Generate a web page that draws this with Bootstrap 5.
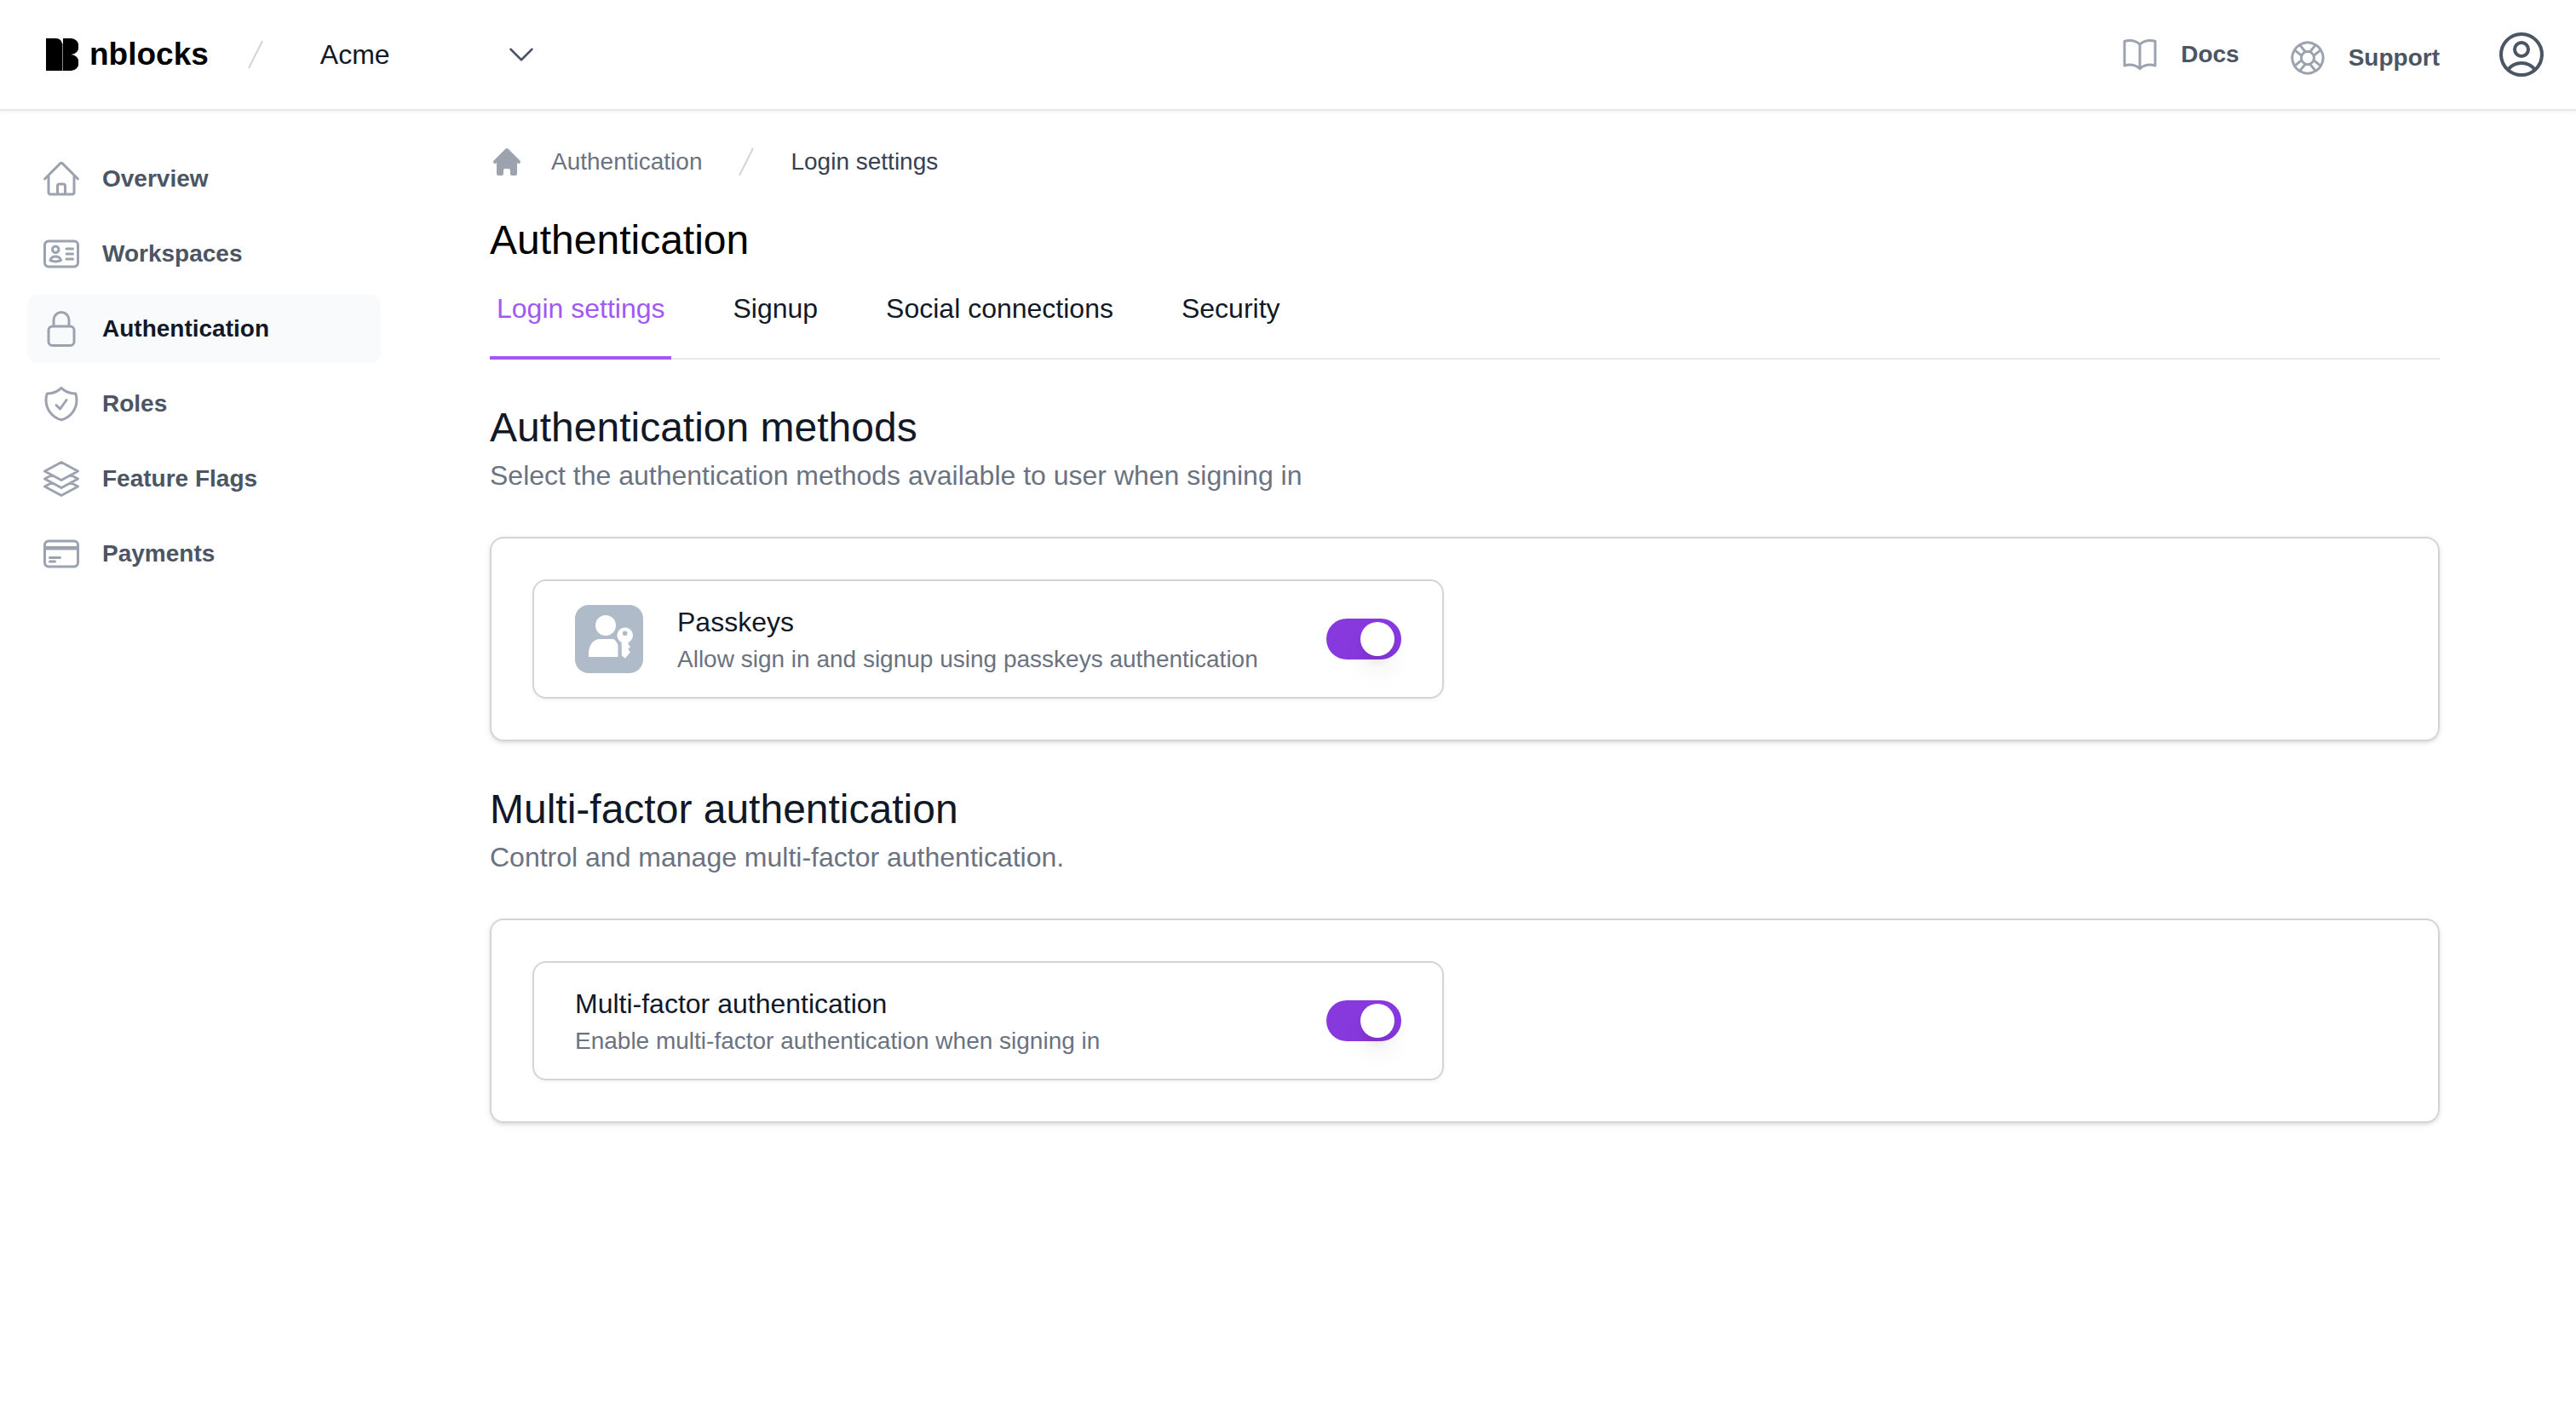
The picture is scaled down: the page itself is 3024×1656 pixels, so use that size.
<!DOCTYPE html>
<html lang="en">
<head>
<meta charset="utf-8">
<meta name="viewport" content="width=device-width, initial-scale=1">
<title>nblocks - Authentication</title>
<link href="https://cdn.jsdelivr.net/npm/bootstrap@5.3.0/dist/css/bootstrap.min.css" rel="stylesheet">
<style>
  :root {
    --ink: #111827;
    --muted: #6b7280;
    --label: #4b5563;
    --icon: #9ca3af;
    --line: #d1d5db;
    --hairline: #e5e7eb;
  }
  body {
    font-family: "Liberation Sans", Arial, Helvetica, sans-serif;
    font-size: 32px;
    line-height: 48px;
    color: var(--ink);
    background: #fff;
  }
  a { text-decoration: none; }
  .icon { width: 48px; height: 48px; flex: none; color: var(--icon); }
  .icon-sm { width: 40px; height: 40px; flex: none; }
  .outline { fill: none; stroke: currentColor; stroke-width: 1.5; stroke-linecap: round; stroke-linejoin: round; }
  .text-label { font-size: 28px; line-height: 40px; }

  /* Top bar */
  .topbar {
    height: 130px;
    padding: 0 32px 0 54px;
    border-bottom: 2px solid var(--hairline);
    box-shadow: 0 2px 4px rgba(0, 0, 0, .05);
  }
  .brand { gap: 13px; font-size: 37px; font-weight: 700; color: #000; }
  .brand svg { width: 38px; height: 38px; }
  .divider { color: var(--line); }
  .topbar .divider { margin: 0 32px 0 35px; }
  .workspace-select {
    width: 304px;
    padding: 0 24px;
    border: 0;
    font-size: 32px;
    line-height: 48px;
    color: var(--ink);
    background-color: transparent;
    background-image: url("data:image/svg+xml,%3csvg xmlns='http://www.w3.org/2000/svg' viewBox='0 0 24 24' fill='none' stroke='%234b5563' stroke-width='1.5' stroke-linecap='round' stroke-linejoin='round'%3e%3cpath d='M19.5 8.25l-7.5 7.5-7.5-7.5'/%3e%3c/svg%3e");
    background-size: 40px 40px;
    background-position: right 24px center;
  }
  .help-links { gap: 56px; margin-right: 64px; }
  .help-links a { gap: 24px; color: var(--label); font-weight: 700; }
  .account { color: var(--label); }
  .account svg { width: 64px; height: 64px; display: block; }

  /* Side navigation */
  .sidebar { width: 447px; flex: none; padding: 40px 0 0 32px; }
  .sidebar .nav { gap: 8px; }
  .sidebar .nav-link {
    display: flex; align-items: center; gap: 24px;
    padding: 16px;
    border-radius: 12px;
    font-size: 28px; line-height: 40px; font-weight: 700;
    color: var(--label);
  }
  .sidebar .nav-link.active { color: var(--ink); background: #f9fafb; }

  /* Content */
  .content { padding: 40px 160px 48px 128px; min-width: 0; }
  .trail { gap: 32px; font-size: 28px; line-height: 40px; margin-bottom: 40px; }
  .trail a { color: var(--muted); }
  .trail [aria-current] { color: #374151; }
  .page-title, .section-title { font-size: 48px; line-height: 64px; font-weight: 400; margin: 0; }
  .page-title { color: #000; margin-bottom: 24px; }
  .tabs { gap: 64px; box-shadow: inset 0 -2px var(--hairline); margin-bottom: 48px; }
  .tabs .nav-link { padding: 0 8px 32px; border-bottom: 4px solid transparent; color: var(--ink); }
  .tabs .nav-link.active { color: #a158f5; border-color: #a158f5; }
  .section-note { color: var(--muted); margin: 0 0 48px; }
  .panel {
    padding: 48px;
    margin-bottom: 48px;
    border: 2px solid var(--line);
    border-radius: 16px;
    box-shadow: 0 2px 6px rgba(0, 0, 0, .1), 0 2px 4px -2px rgba(0, 0, 0, .1);
  }
  .panel .row { --bs-gutter-x: 50px; }
  .option {
    padding: 24px 48px;
    gap: 40px;
    border: 2px solid var(--line);
    border-radius: 16px;
    box-shadow: 0 2px 4px rgba(0, 0, 0, .05);
  }
  .option-icon { width: 80px; height: 80px; flex: none; }
  .option-note { color: var(--muted); }
  .toggle.form-check-input {
    width: 88px; height: 48px; flex: none;
    margin: 0; padding: 4px;
    border: 0; border-radius: 24px;
    background: #d1d5db;
  }
  .toggle::before {
    content: ""; display: block;
    width: 40px; height: 40px; border-radius: 50%;
    background: #fff;
    box-shadow: 0 20px 30px -6px rgba(0, 0, 0, .1), 0 8px 12px -4px rgba(0, 0, 0, .1);
  }
  .toggle.form-check-input:checked { background: #8839de; }
  .toggle:checked::before { margin-left: 36px; }
</style>
</head>
<body>

<header class="topbar d-flex align-items-center">
  <a class="brand d-flex align-items-center" href="#">
    <svg viewBox="0 0 38 38" aria-hidden="true"><path d="M18 6h2v32h-2z" fill="#888"/><path d="M0 0h12a7 7 0 0 1 7 7v31H0z"/><path d="M20 0h9.500a9 9.500 0 0 1 0 19a9 9.500 0 0 1 0 19H20z"/></svg>
    <span>nblocks</span>
  </a>
  <svg class="icon-sm divider" viewBox="0 0 20 20" fill="currentColor" aria-hidden="true"><path d="M5.555 17.776l8-16 .894.448-8 16-.894-.448z"/></svg>
  <select class="form-select workspace-select" aria-label="Workspace">
    <option selected>Acme</option>
  </select>

  <nav class="help-links d-flex align-items-center ms-auto text-label" aria-label="Help">
    <a class="d-flex align-items-center" href="#">
      <svg class="icon outline" viewBox="0 0 24 24" aria-hidden="true"><path d="M12 6.042A8.967 8.967 0 006 3.750c-1.052 0-2.062.18-3 .512v14.250A8.987 8.987 0 016 18c2.305 0 4.408.867 6 2.292m0-14.250a8.966 8.966 0 016-2.292c1.052 0 2.062.18 3 .512v14.250A8.987 8.987 0 0018 18a8.967 8.967 0 00-6 2.292m0-14.250v14.250"/></svg>
      <span>Docs</span>
    </a>
    <a class="d-flex align-items-center pt-2" href="#">
      <svg class="icon outline" viewBox="0 0 24 24" aria-hidden="true"><path d="M16.712 4.330a9.027 9.027 0 011.652 1.306c.51.51.944 1.064 1.306 1.652M16.712 4.330l-3.448 4.138m3.448-4.138a9.014 9.014 0 00-9.424 0M19.670 7.288l-4.138 3.448m4.138-3.448a9.014 9.014 0 010 9.424m-4.138-5.976a3.736 3.736 0 00-.88-1.388 3.737 3.737 0 00-1.388-.88m2.268 2.268a3.765 3.765 0 010 2.528m-2.268-4.796a3.765 3.765 0 00-2.528 0m4.796 4.796c-.181.506-.475.982-.88 1.388a3.736 3.736 0 01-1.388.88m2.268-2.268l4.138 3.448m0 0a9.027 9.027 0 01-1.306 1.652c-.51.51-1.064.944-1.652 1.306m0 0l-3.448-4.138m3.448 4.138a9.014 9.014 0 01-9.424 0m5.976-4.138a3.765 3.765 0 01-2.528 0m0 0a3.736 3.736 0 01-1.388-.88 3.737 3.737 0 01-.88-1.388m2.268 2.268L7.288 19.670m0 0a9.024 9.024 0 01-1.652-1.306 9.027 9.027 0 01-1.306-1.652m0 0l4.138-3.448M4.330 16.712a9.014 9.014 0 010-9.424m4.138 5.976a3.765 3.765 0 010-2.528m0 0c.181-.506.475-.982.88-1.388a3.736 3.736 0 011.388-.88m-2.268 2.268L4.330 7.288m6.406 1.180L7.288 4.330m0 0a9.024 9.024 0 00-1.652 1.306A9.025 9.025 0 004.330 7.288"/></svg>
      <span>Support</span>
    </a>
  </nav>
  <button type="button" class="account btn p-0 border-0" aria-label="Account">
    <svg class="outline" viewBox="0 0 24 24" aria-hidden="true"><path d="M17.982 18.725A7.488 7.488 0 0012 15.750a7.488 7.488 0 00-5.982 2.975m11.963 0a9 9 0 10-11.963 0m11.963 0A8.966 8.966 0 0112 21a8.966 8.966 0 01-5.982-2.275M15 9.750a3 3 0 11-6 0 3 3 0 016 0z"/></svg>
  </button>
</header>

<div class="d-flex">
  <aside class="sidebar">
    <nav class="nav flex-column" aria-label="Main">
      <a class="nav-link" href="#">
        <svg class="icon outline" viewBox="0 0 24 24" aria-hidden="true"><path d="M2.250 12l8.954-8.955c.44-.439 1.152-.439 1.591 0L21.750 12M4.500 9.750v10.125c0 .621.504 1.125 1.125 1.125H9.750v-4.875c0-.621.504-1.125 1.125-1.125h2.250c.621 0 1.125.504 1.125 1.125V21h4.125c.621 0 1.125-.504 1.125-1.125V9.750M8.250 21h8.250"/></svg>
        Overview
      </a>
      <a class="nav-link" href="#">
        <svg class="icon outline" viewBox="0 0 24 24" aria-hidden="true"><path d="M15 9h3.750M15 12h3.750M15 15h3.750M4.500 19.500h15a2.250 2.250 0 002.250-2.250V6.750A2.250 2.250 0 0019.500 4.500h-15a2.250 2.250 0 00-2.250 2.250v10.500A2.250 2.250 0 004.500 19.500zm6-10.125a1.875 1.875 0 11-3.750 0 1.875 1.875 0 013.750 0zm1.294 6.336a6.721 6.721 0 01-3.170.789 6.721 6.721 0 01-3.168-.789 3.376 3.376 0 016.338 0z"/></svg>
        Workspaces
      </a>
      <a class="nav-link active" href="#" aria-current="page">
        <svg class="icon outline" viewBox="0 0 24 24" aria-hidden="true"><path d="M16.500 10.500V6.750a4.500 4.500 0 10-9 0v3.750m-.75 11.250h10.500a2.250 2.250 0 002.250-2.250v-6.750a2.250 2.250 0 00-2.250-2.250H6.750a2.250 2.250 0 00-2.250 2.250v6.750a2.250 2.250 0 002.250 2.250z"/></svg>
        Authentication
      </a>
      <a class="nav-link" href="#">
        <svg class="icon outline" viewBox="0 0 24 24" aria-hidden="true"><path d="M9 12.750L11.250 15 15 9.750m-3-7.036A11.959 11.959 0 013.598 6 11.990 11.990 0 003 9.749c0 5.592 3.824 10.290 9 11.623 5.176-1.332 9-6.030 9-11.622 0-1.310-.21-2.571-.598-3.751h-.152c-3.196 0-6.100-1.248-8.250-3.285z"/></svg>
        Roles
      </a>
      <a class="nav-link" href="#">
        <svg class="icon outline" viewBox="0 0 24 24" aria-hidden="true"><path d="M6.429 9.750L2.250 12l4.179 2.250m0-4.500l5.571 3 5.571-3m-11.142 0L2.250 7.500 12 2.250l9.750 5.250-4.179 2.250m0 0L21.750 12l-4.179 2.250m0 0l4.179 2.250L12 21.750 2.250 16.500l4.179-2.250m11.142 0l-5.571 3-5.571-3"/></svg>
        Feature Flags
      </a>
      <a class="nav-link" href="#">
        <svg class="icon outline" viewBox="0 0 24 24" aria-hidden="true"><path d="M2.250 8.250h19.500M2.250 9h19.500m-16.500 5.250h6m-6 2.250h3m-3.750 3h15a2.250 2.250 0 002.250-2.250V6.750A2.250 2.250 0 0019.500 4.500h-15a2.250 2.250 0 00-2.250 2.250v10.500A2.250 2.250 0 004.500 19.500z"/></svg>
        Payments
      </a>
    </nav>
  </aside>

  <main class="content flex-grow-1">
    <nav class="trail d-flex align-items-center" aria-label="Breadcrumb">
      <a class="d-flex" href="#" aria-label="Home">
        <svg class="icon-sm" viewBox="0 0 20 20" fill="#9ca3af" aria-hidden="true"><path d="M10.707 2.293a1 1 0 00-1.414 0l-7 7a1 1 0 001.414 1.414L4 10.414V17a1 1 0 001 1h2a1 1 0 001-1v-2a1 1 0 011-1h2a1 1 0 011 1v2a1 1 0 001 1h2a1 1 0 001-1v-6.586l.293.293a1 1 0 001.414-1.414l-7-7z"/></svg>
      </a>
      <a href="#">Authentication</a>
      <svg class="icon-sm divider" viewBox="0 0 20 20" fill="currentColor" aria-hidden="true"><path d="M5.555 17.776l8-16 .894.448-8 16-.894-.448z"/></svg>
      <span aria-current="page">Login settings</span>
    </nav>

    <h1 class="page-title">Authentication</h1>

    <nav class="tabs nav" aria-label="Authentication sections">
      <a class="nav-link active" href="#" aria-current="page">Login settings</a>
      <a class="nav-link" href="#">Signup</a>
      <a class="nav-link" href="#">Social connections</a>
      <a class="nav-link" href="#">Security</a>
    </nav>

    <section>
      <h2 class="section-title">Authentication methods</h2>
      <p class="section-note">Select the authentication methods available to user when signing in</p>
      <div class="panel">
        <div class="row">
          <div class="col-6">
            <div class="option d-flex align-items-center">
              <svg class="option-icon" viewBox="0 0 80 80" aria-hidden="true">
                <rect width="80" height="80" rx="16" fill="#b0bbca"/>
                <g fill="#fff">
                  <circle cx="36" cy="24" r="12"/>
                  <path d="M16 61v-4C16 47 22 40 29 40h14.500c2 0 3.200.6 4 2 .8 2 3 3 3 5.500V61z"/>
                  <path fill-rule="evenodd" d="M58.700 26.500a9.200 9.200 0 0 1 4 17.500v2.500l2.300 2.300-2.600 3.200 2.600 3.500-6.300 7.200-4-3.700V44a9.200 9.200 0 0 1 4-17.500zm0 4a2.800 2.800 0 1 0 0 5.600 2.800 2.800 0 0 0 0-5.600z"/>
                </g>
              </svg>
              <label class="flex-grow-1" for="passkeys">
                <span class="d-block">Passkeys</span>
                <span class="d-block option-note text-label">Allow sign in and signup using passkeys authentication</span>
              </label>
              <input class="form-check-input toggle" type="checkbox" role="switch" id="passkeys" checked>
            </div>
          </div>
        </div>
      </div>
    </section>

    <section>
      <h2 class="section-title">Multi-factor authentication</h2>
      <p class="section-note">Control and manage multi-factor authentication.</p>
      <div class="panel">
        <div class="row">
          <div class="col-6">
            <div class="option d-flex align-items-center">
              <label class="flex-grow-1" for="mfa">
                <span class="d-block">Multi-factor authentication</span>
                <span class="d-block option-note text-label">Enable multi-factor authentication when signing in</span>
              </label>
              <input class="form-check-input toggle" type="checkbox" role="switch" id="mfa" checked>
            </div>
          </div>
        </div>
      </div>
    </section>
  </main>
</div>

<script src="https://cdn.jsdelivr.net/npm/bootstrap@5.3.0/dist/js/bootstrap.bundle.min.js"></script>
</body>
</html>
